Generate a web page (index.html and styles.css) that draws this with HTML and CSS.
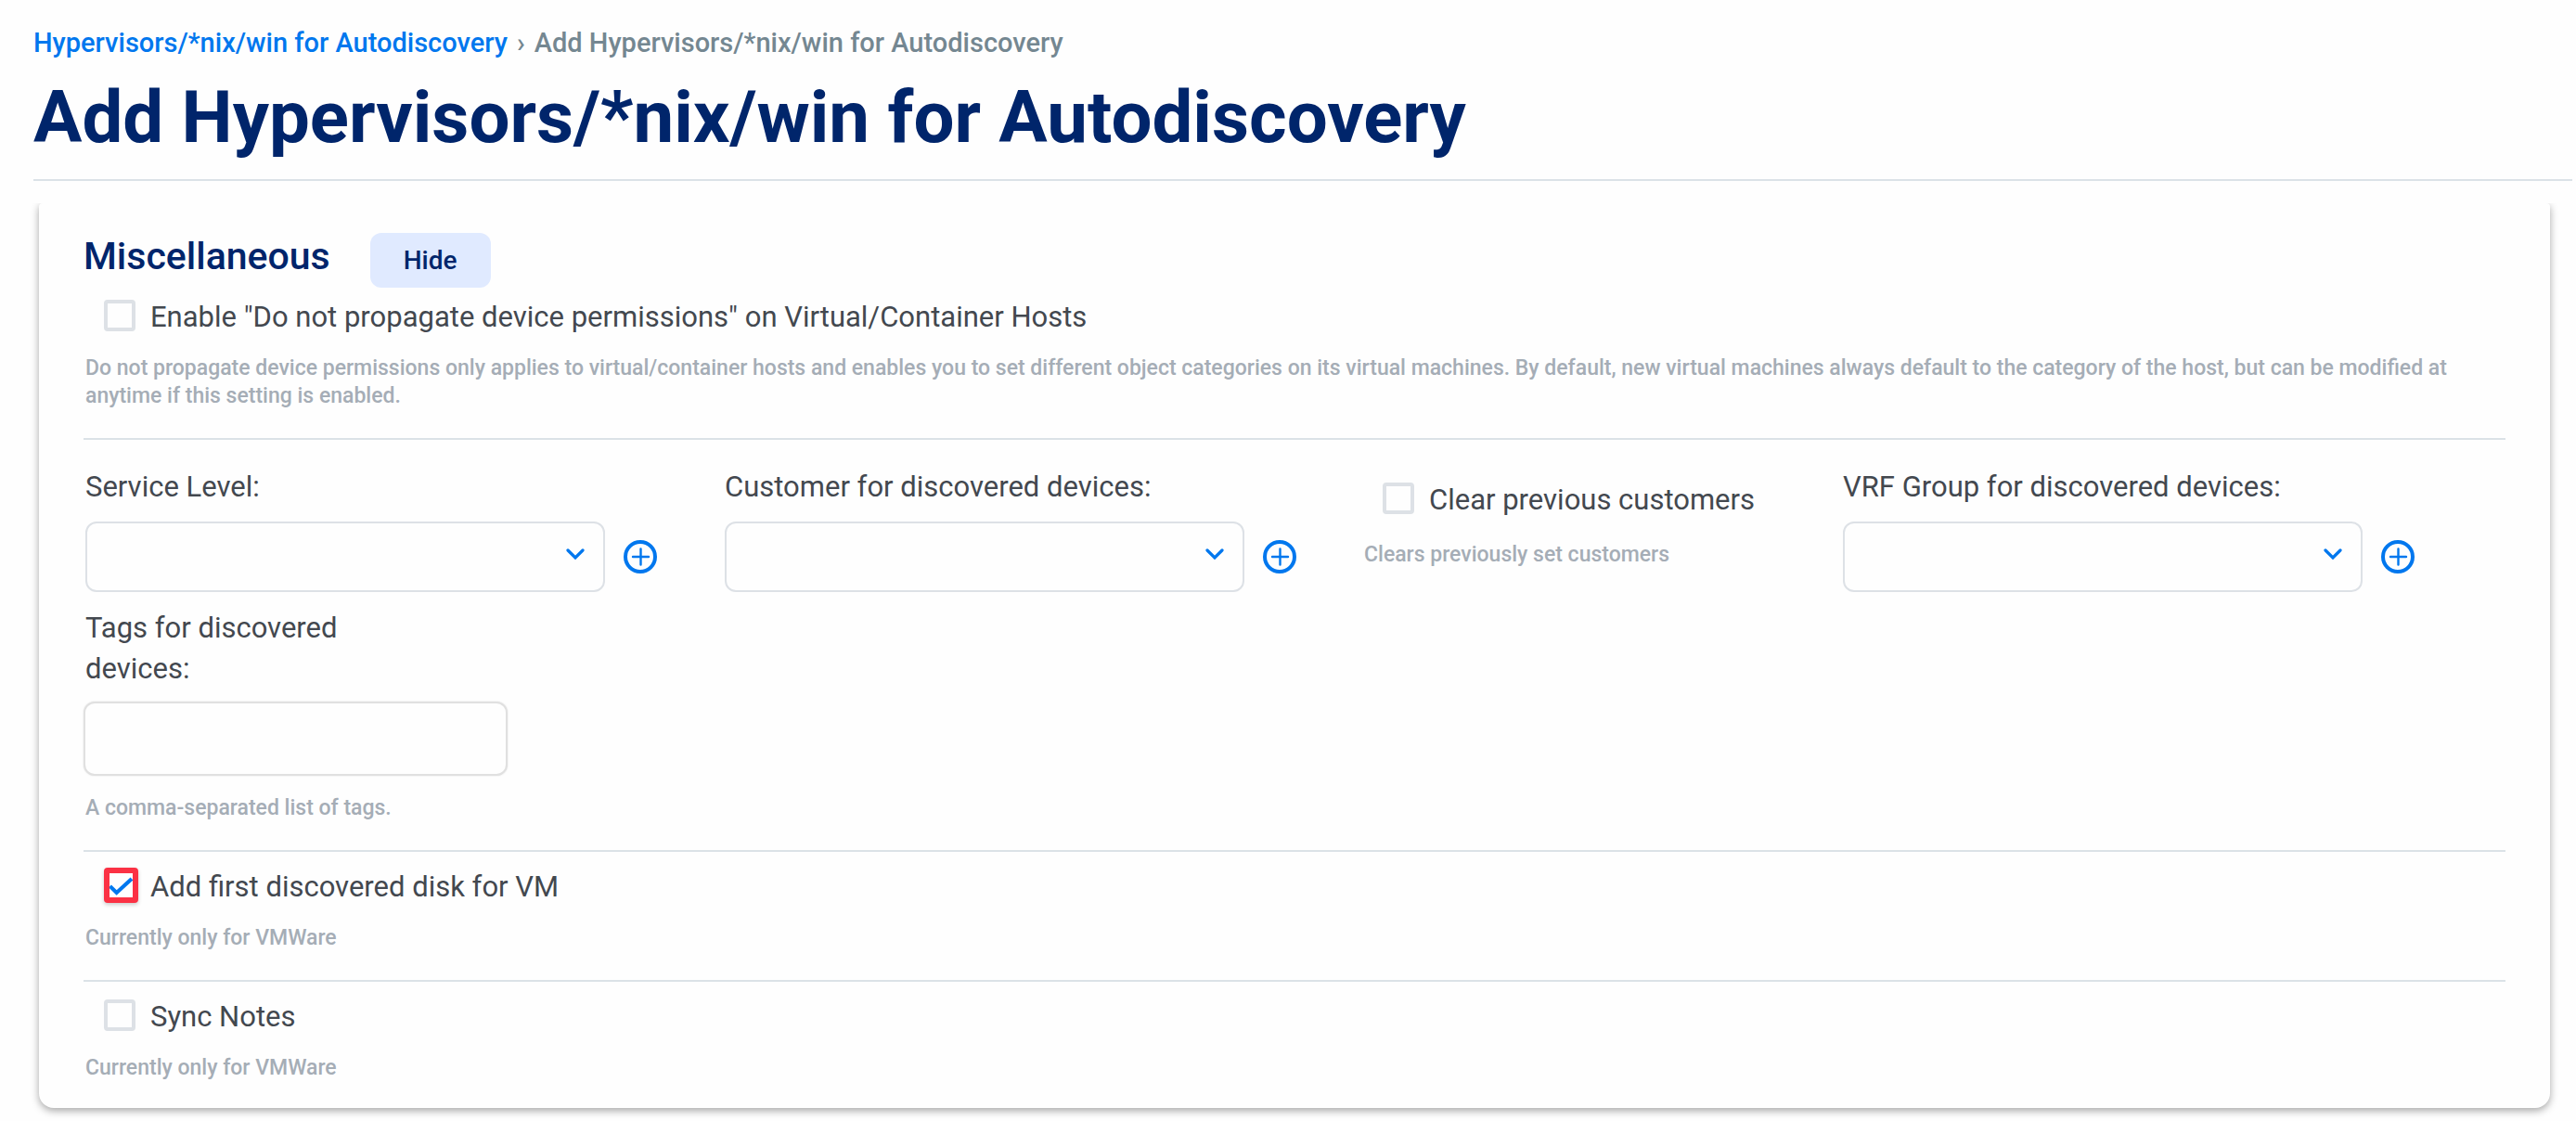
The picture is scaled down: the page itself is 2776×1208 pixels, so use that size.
FILE: index.html
```html
<!DOCTYPE html>
<html lang="en">
<head>
  <meta charset="utf-8">
  <meta name="viewport" content="width=device-width, initial-scale=1">
  <title>Add Hypervisors/*nix/win for Autodiscovery</title>
  <link rel="stylesheet" href="styles.css">
</head>
<body>
  <header class="page-header">
    <nav class="breadcrumb" aria-label="Breadcrumb">
      <a class="breadcrumb-link" href="#">Hypervisors/*nix/win for Autodiscovery</a>
      <span>›</span>
      <span>Add Hypervisors/*nix/win for Autodiscovery</span>
    </nav>
    <h1 class="page-title">Add Hypervisors/*nix/win for Autodiscovery</h1>
  </header>

  <main class="card">
    <div class="card-header">
      <h2 class="card-title">Miscellaneous</h2>
      <button class="toggle" type="button">Hide</button>
    </div>

    <section class="section section-first">
      <div class="check-row">
        <input class="checkbox" type="checkbox" id="no-propagate">
        <label for="no-propagate">Enable "Do not propagate device permissions" on Virtual/Container Hosts</label>
      </div>
      <p class="help">Do not propagate device permissions only applies to virtual/container hosts and enables you to set different object categories on its virtual machines. By default, new virtual machines always default to the category of the host, but can be modified at anytime if this setting is enabled.</p>
    </section>

    <section class="section fields">
      <div class="field">
        <label for="service-level">Service Level:</label>
        <div class="select-row">
          <select class="select" id="service-level"><option></option></select>
          <button class="add" type="button" aria-label="Add service level">
            <svg class="add-icon" viewBox="0 0 36 36"><circle cx="18" cy="18" r="16" stroke-width="4"/><path d="M10 18h17M18.500 9.500v17" stroke-width="2.400"/></svg>
          </button>
        </div>
      </div>
      <div class="field">
        <label for="customer">Customer for discovered devices:</label>
        <div class="select-row">
          <select class="select" id="customer"><option></option></select>
          <button class="add" type="button" aria-label="Add customer">
            <svg class="add-icon" viewBox="0 0 36 36"><circle cx="18" cy="18" r="16" stroke-width="4"/><path d="M10 18h17M18.500 9.500v17" stroke-width="2.400"/></svg>
          </button>
        </div>
      </div>
      <div class="field-clear">
        <div class="check-row">
          <input class="checkbox" type="checkbox" id="clear-customers">
          <label for="clear-customers">Clear previous customers</label>
        </div>
        <p class="help">Clears previously set customers</p>
      </div>
      <div class="field">
        <label for="vrf-group">VRF Group for discovered devices:</label>
        <div class="select-row">
          <select class="select" id="vrf-group"><option></option></select>
          <button class="add" type="button" aria-label="Add VRF group">
            <svg class="add-icon" viewBox="0 0 36 36"><circle cx="18" cy="18" r="16" stroke-width="4"/><path d="M10 18h17M18.500 9.500v17" stroke-width="2.400"/></svg>
          </button>
        </div>
      </div>
      <div class="field field-tags">
        <label class="label-narrow" for="tags">Tags for discovered devices:</label>
        <input class="text-input" type="text" id="tags">
        <p class="help">A comma-separated list of tags.</p>
      </div>
    </section>

    <section class="section">
      <div class="check-row">
        <input class="checkbox checkbox-marked" type="checkbox" id="first-disk" checked>
        <label for="first-disk">Add first discovered disk for VM</label>
      </div>
      <p class="help">Currently only for VMWare</p>
    </section>

    <section class="section">
      <div class="check-row">
        <input class="checkbox" type="checkbox" id="sync-notes">
        <label for="sync-notes">Sync Notes</label>
      </div>
      <p class="help">Currently only for VMWare</p>
    </section>
  </main>
</body>
</html>
```
FILE: styles.css
```css
* {
  box-sizing: border-box;
}

body {
  margin: 0;
  padding: 28px 0 12px 36px;
  background: #fefefe;
  color: #43484f;
  font-family: Roboto, "Liberation Sans", sans-serif;
  font-size: 31px;
  line-height: 44px;
}

h1,
h2,
p {
  margin: 0;
}

.page-header {
  margin-right: 4px;
  padding-bottom: 20px;
  border-bottom: 2px solid #dbe2e7;
}

.breadcrumb {
  display: flex;
  flex-wrap: wrap;
  gap: 10px;
  color: #748791;
  font-size: 29px;
  font-weight: 500;
  line-height: 36px;
}

.breadcrumb-link {
  color: #0077ee;
  text-decoration: none;
}

.page-title {
  margin-top: 16px;
  color: #00256b;
  font-size: 78px;
  font-weight: 700;
  line-height: 93px;
}

.card {
  margin: 24px 28px 0 6px;
  padding: 32px 48px 0;
  border-radius: 4px 4px 16px 16px;
  background: #fefefe;
  box-shadow: 0 3px 8px rgba(0, 0, 0, 0.35);
  clip-path: inset(0 -16px -16px -16px);
}

.card-header {
  display: flex;
  align-items: baseline;
  gap: 43px;
}

.card-title {
  color: #00256b;
  font-size: 41px;
  font-weight: 500;
}

.toggle {
  padding: 12px 36px;
  border: 0;
  border-radius: 12px;
  background: #e0eaff;
  color: #00256b;
  font: 500 28px/35px Roboto, "Liberation Sans", sans-serif;
}

.section {
  padding: 16px 0 30px 2px;
  border-bottom: 2px solid #dbe2e7;
}

.section-first {
  padding-top: 10px;
}

.section:last-child {
  padding-bottom: 28px;
  border-bottom: 0;
}

.check-row {
  display: flex;
  align-items: center;
  gap: 16px;
  padding-left: 20px;
}

.help {
  margin-top: 18px;
  color: #a5adb6;
  font-size: 23px;
  font-weight: 500;
  line-height: 30px;
}

.checkbox {
  flex: none;
  width: 34px;
  height: 34px;
  margin: 0 0 4px;
  appearance: none;
  border: 4px solid #dde1e6;
  border-radius: 4px;
  background: #fefefe center / 26px 26px no-repeat;
}

.checkbox:checked {
  background-image: url("data:image/svg+xml,%3Csvg xmlns='http://www.w3.org/2000/svg' viewBox='0 0 26 26' fill='none' stroke='%230077ee' stroke-width='4'%3E%3Cpath d='M1 14l7 7L24 6'/%3E%3C/svg%3E");
}

.checkbox-marked {
  width: 37px;
  height: 38px;
  margin-right: -3px;
  border: 6px solid #fb3144;
  box-shadow: 0 2px 4px rgba(0, 0, 0, 0.2);
}

.fields {
  display: flex;
  flex-wrap: wrap;
  gap: 17px 73px;
  padding-top: 29px;
}

.field {
  display: flex;
  flex-direction: column;
  gap: 15px;
}

.field-clear {
  width: 443px;
  padding-top: 14px;
}

.field-clear .help {
  margin-top: 22px;
}

.select-row {
  display: flex;
  align-items: center;
  gap: 20px;
}

.select {
  width: 560px;
  height: 76px;
  padding: 0 56px 0 20px;
  appearance: none;
  border: 2px solid #dde1e6;
  border-radius: 12px;
  background: #fefefe url("data:image/svg+xml,%3Csvg xmlns='http://www.w3.org/2000/svg' viewBox='0 0 20 12' fill='none' stroke='%230077ee' stroke-width='3.200' stroke-linecap='round'%3E%3Cpath d='M2 2l8 8 8-8'/%3E%3C/svg%3E") right 20px top 27px / 20px 12px no-repeat;
  font: inherit;
}

.add {
  width: 36px;
  height: 36px;
  padding: 0;
  border: 0;
  background: none;
}

.add-icon {
  display: block;
  width: 36px;
  height: 36px;
  fill: none;
  stroke: #0077ee;
  stroke-linecap: round;
}

.field-tags {
  gap: 13px;
}

.label-narrow {
  max-width: 320px;
}

.text-input {
  width: 457px;
  height: 80px;
  margin-left: -2px;
  padding: 0 20px;
  border: 2px solid #e0e0e0;
  border-radius: 12px;
  background: #fefefe;
  box-shadow: 0 0 2px rgba(0, 0, 0, 0.12);
  font: inherit;
}

.text-input + .help {
  margin-top: 7px;
}
```
